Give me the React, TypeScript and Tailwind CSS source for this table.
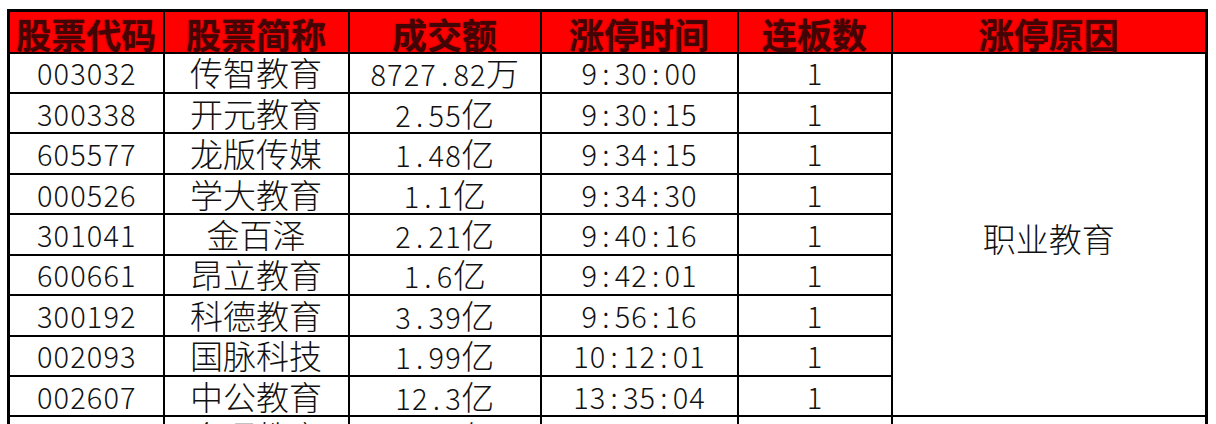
import React from "react";

const headers = ["股票代码", "股票简称", "成交额", "涨停时间", "连板数", "涨停原因"];

const rows: [string, string, string, string, string][] = [
  ["003032", "传智教育", "8727.82万", "9:30:00", "1"],
  ["300338", "开元教育", "2.55亿", "9:30:15", "1"],
  ["605577", "龙版传媒", "1.48亿", "9:34:15", "1"],
  ["000526", "学大教育", "1.1亿", "9:34:30", "1"],
  ["301041", "金百泽", "2.21亿", "9:40:16", "1"],
  ["600661", "昂立教育", "1.6亿", "9:42:01", "1"],
  ["300192", "科德教育", "3.39亿", "9:56:16", "1"],
  ["002093", "国脉科技", "1.99亿", "10:12:01", "1"],
  ["002607", "中公教育", "12.3亿", "13:35:04", "1"],
];

function Mixed({ text }: { text: string }) {
  const parts = text.match(/[\x00-\x7F]+|[^\x00-\x7F]+/g) || [];
  return (
    <>
      {parts.map((p, i) =>
        /^[\x00-\x7F]+$/.test(p) ? (
          <span key={i} className="font-['Noto_Sans_CJK_SC',sans-serif] font-light text-[29px]">
            {p.split("").map((ch, k) => (
              <span key={k} className="inline-block w-[16.6px] text-center">
                {ch}
              </span>
            ))}
          </span>
        ) : (
          <span key={i} className="font-['Noto_Sans_CJK_SC',sans-serif] font-light text-[33px]">
            {p}
          </span>
        )
      )}
    </>
  );
}

export default function App() {
  const widths = [155, 185, 192, 197, 154, 315];
  return (
    <div className="w-[1216px] h-[424px] overflow-hidden bg-white pl-[7px] pt-[9px]">
      <table className="border-collapse table-fixed w-[1200px] border-[3px] border-black">
        <colgroup>
          {widths.map((w, i) => (
            <col key={i} style={{ width: w }} />
          ))}
        </colgroup>
        <thead>
          <tr className="h-[42px] bg-[#ff0000]">
            {headers.map((h) => (
              <th
                key={h}
                className="border-2 border-black p-0 pt-[4px] align-middle text-center leading-none font-['Noto_Sans_CJK_SC',sans-serif] font-bold text-[35px] text-[#420404] [text-shadow:0_0_2px_rgba(90,0,0,0.6)]"
              >
                {h}
              </th>
            ))}
          </tr>
        </thead>
        <tbody>
          {rows.map((r, idx) => (
            <tr key={r[0]} className="h-[40.45px]">
              {r.map((c, j) => (
                <td
                  key={j}
                  className="border-2 border-black p-0 text-center align-middle leading-none text-[#111]"
                >
                  <Mixed text={c} />
                </td>
              ))}
              {idx === 0 && (
                <td
                  rowSpan={9}
                  className="border-2 border-black p-0 text-center align-middle leading-none text-[#111]"
                >
                  <span className="font-['Noto_Sans_CJK_SC',sans-serif] font-light text-[33px] relative top-[4px]">
                    职业教育
                  </span>
                </td>
              )}
            </tr>
          ))}
          <tr className="h-[40px]">
            {["300359", "全通教育", "4.28亿", "13:52:30", "1", ""].map((c, j) => (
              <td
                key={j}
                className="border-2 border-black p-0 text-center align-middle leading-none text-[#111]"
              >
                <Mixed text={c} />
              </td>
            ))}
          </tr>
        </tbody>
      </table>
    </div>
  );
}
